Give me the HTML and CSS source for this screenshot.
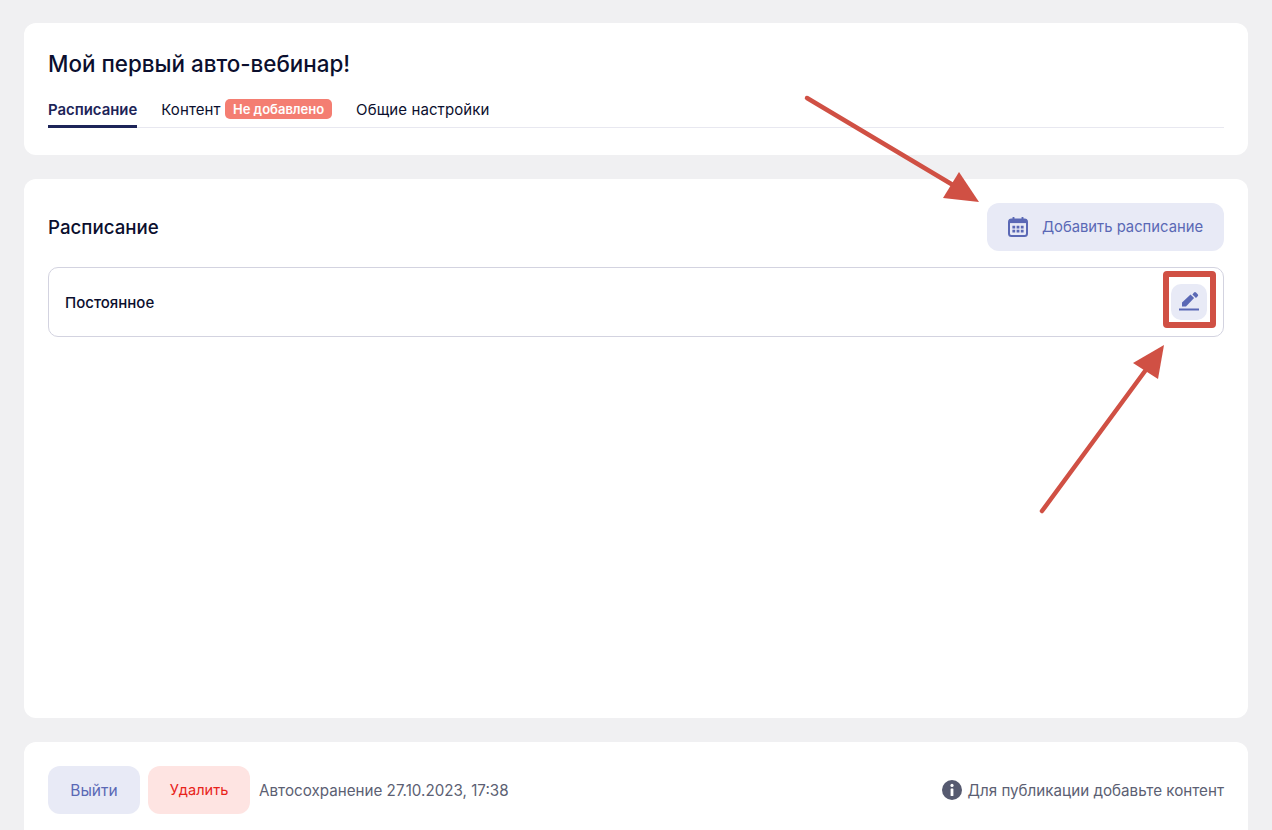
FILE: index.html
```html
<!DOCTYPE html>
<html lang="ru">
<head>
<meta charset="utf-8">
<title>Мой первый авто-вебинар!</title>
<link rel="stylesheet" href="styles.css">
</head>
<body>
<main class="page">
  <section class="card head">
    <h1 class="title">Мой первый авто-вебинар!</h1>
    <nav class="tabs">
      <a class="tab active">Расписание</a>
      <a class="tab">Контент <span class="badge">Не добавлено</span></a>
      <a class="tab">Общие настройки</a>
    </nav>
  </section>
  <section class="card body">
    <div class="body-top">
      <h2 class="subtitle">Расписание</h2>
      <button class="btn btn-add">
        <svg class="ico-cal" viewBox="0 0 20 20" width="20" height="20" fill="none">
          <rect x="1" y="2.5" width="18" height="16.5" rx="2.5" stroke="#5a68b5" stroke-width="2"/>
          <path d="M1 2.5h18v3.6H1z" fill="#5a68b5"/>
          <path d="M5.5 .8v3M14.5 .8v3" stroke="#5a68b5" stroke-width="2" stroke-linecap="round"/>
          <path d="M4.4 8.8h2.8v2.8H4.4zM8.6 8.8h2.8v2.8H8.6zM12.8 8.8h2.8v2.8h-2.8zM4.4 12.8h2.8v2.8H4.4zM8.6 12.8h2.8v2.8H8.6zM12.8 12.8h2.8v2.8h-2.8z" fill="#5a68b5"/>
        </svg>
        Добавить расписание
      </button>
    </div>
    <div class="row">
      <span class="row-name">Постоянное</span>
      <button class="btn-edit">
        <svg viewBox="0 0 22 22" width="22" height="22" fill="#5a68b5">
          <path d="M4 15.5v-4l8.5-8 3.6 3.6-8.1 8.4z"/>
          <path d="M14.4 3.4 16 1.6a1.4 1.4 0 0 1 2 0l1.7 1.7a1.4 1.4 0 0 1 0 2L18 6.9z"/>
          <rect x="1" y="17.5" width="20" height="2"/>
        </svg>
      </button>
    </div>
  </section>
  <section class="card foot">
    <div class="foot-left">
      <button class="btn btn-exit">Выйти</button>
      <button class="btn btn-del">Удалить</button>
      <span class="muted">Автосохранение 27.10.2023, 17:38</span>
    </div>
    <div class="foot-right">
      <svg viewBox="0 0 20 20" width="20" height="20">
        <circle cx="10" cy="10" r="10" fill="#565a70"/>
        <circle cx="10" cy="5.4" r="1.6" fill="#fff"/>
        <rect x="8.6" y="8.4" width="2.8" height="7.6" rx=".6" fill="#fff"/>
      </svg>
      <span class="muted">Для публикации добавьте контент</span>
    </div>
  </section>
</main>
<svg class="notes" viewBox="0 0 1272 830" width="1272" height="830">
  <path d="M807 98 958 188" stroke="#d05044" stroke-width="4.5" stroke-linecap="round" fill="none"/>
  <path d="M979 202 943 198 959 172z" fill="#d05044"/>
  <path d="M1042 511 1148 367" stroke="#d05044" stroke-width="4.5" stroke-linecap="round" fill="none"/>
  <path d="M1164 345 1158 379 1133 363z" fill="#d05044"/>
  <rect x="1166" y="274" width="47" height="51" rx="1" stroke="#d05044" stroke-width="6" fill="none"/>
</svg>
</body>
</html>
```
FILE: styles.css
```css
* { box-sizing: border-box; }
html, body { margin: 0; height: 100%; overflow: hidden; }
body {
  background: #f0f0f2;
  font-family: Inter, "Noto Sans", sans-serif;
  color: #0b0f2e;
  position: relative;
}
.page {
  display: flex;
  flex-direction: column;
  gap: 24px;
  padding: 23px 24px 0;
}
.card { background: #fff; border-radius: 12px; padding: 24px; }
.head { height: 132px; padding-bottom: 27px; }
.title {
  margin: 0;
  font-size: 22.4px;
  line-height: 34px;
  font-weight: 500;
}
.tabs {
  display: flex;
  gap: 24px;
  margin-top: 17px;
  height: 30px;
  border-bottom: 1px solid #e8e8f0;
}
.tab {
  display: block;
  height: 30px;
  font-size: 15px;
  line-height: 24px;
  letter-spacing: .1px;
}
.tab.active { font-weight: 600; font-size: 14.9px; color: #1d2458; border-bottom: 3px solid #1d2458; letter-spacing: 0; }
.badge {
  display: inline-block;
  background: #f47e72;
  color: #fff;
  font-size: 13px;
  font-weight: 600;
  letter-spacing: 0;
  line-height: 20px;
  height: 20px;
  padding: 0 8px;
  border-radius: 5px;
  vertical-align: 1px;
}
.body { height: 539px; }
.body-top { display: flex; justify-content: space-between; align-items: center; }
.subtitle { margin: 0; padding-top: 2px; font-size: 18.7px; font-weight: 500; line-height: 26px; }
.btn {
  border: 0;
  height: 48px;
  border-radius: 12px;
  font-family: inherit;
  font-size: 15.5px;
  display: inline-flex;
  align-items: center;
  justify-content: center;
}
.btn-add { width: 237px; gap: 14px; background: #e8eaf6; color: #5a68b5; font-size: 14.8px; }
.row {
  margin-top: 16px;
  height: 70px;
  border: 1px solid #d3d3e0;
  border-radius: 10px;
  padding: 0 16px;
  display: flex;
  align-items: center;
  justify-content: space-between;
}
.row-name { font-size: 15px; font-weight: 500; }
.btn-edit {
  width: 36px;
  height: 36px;
  border: 0;
  border-radius: 10px;
  background: #e8eaf6;
  display: flex;
  align-items: center;
  justify-content: center;
  padding: 0;
}
.foot { height: 110px; display: flex; justify-content: space-between; align-items: flex-start; }
.foot-left { display: flex; align-items: center; gap: 8px; }
.foot-right { display: flex; align-items: center; gap: 6px; height: 48px; }
.btn-exit { width: 92px; background: #e8eaf6; color: #5a68b5; }
.btn-del { width: 102px; background: #fee4e2; color: #e8231a; font-size: 14.6px; }
.muted { font-size: 15.2px; color: #5c5f73; }
.foot-left .muted { margin-left: 1px; }
.notes { position: absolute; left: 0; top: 0; pointer-events: none; }
```
